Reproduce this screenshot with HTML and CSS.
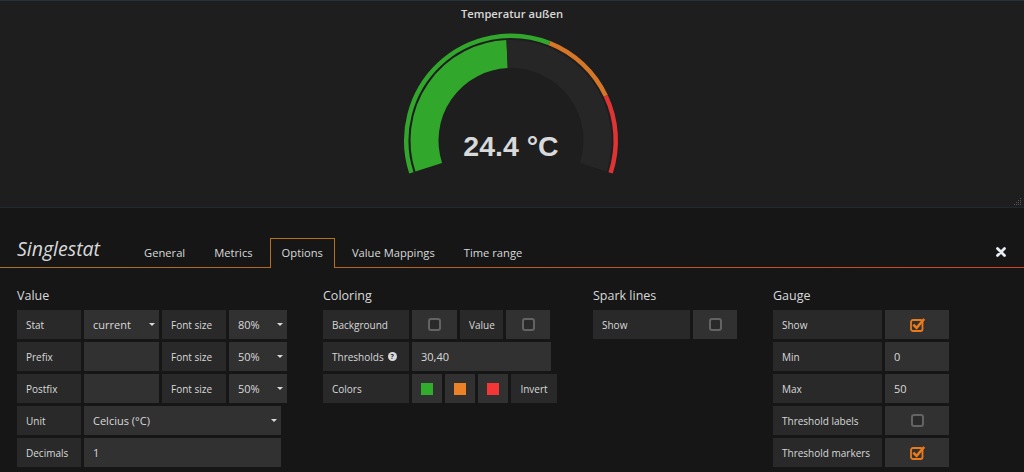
FILE: index.html
```html
<!DOCTYPE html>
<html lang="de">
<head>
<meta charset="utf-8">
<title>Singlestat</title>
<link rel="stylesheet" href="styles.css">
</head>
<body>
<div class="panel">
  <div class="panel-title">Temperatur außen</div>
  <svg class="gauge" width="230" height="160" viewBox="0 0 230 160">
    <path d="M15.38 151.87 A104.75 104.75 0 0 1 153.56 22.11" stroke="#31a82c" stroke-width="4.5" fill="none"/>
    <path d="M153.56 22.11 A104.75 104.75 0 0 1 209.78 74.90" stroke="#d67627" stroke-width="4.5" fill="none"/>
    <path d="M209.78 74.90 A104.75 104.75 0 0 1 214.62 151.87" stroke="#e03434" stroke-width="4.5" fill="none"/>
    <path d="M32.73 146.23 A86.5 86.5 0 0 1 111.09 33.09" stroke="#31a82c" stroke-width="28" fill="none"/>
    <path d="M111.09 33.09 A86.5 86.5 0 0 1 197.27 146.23" stroke="#262626" stroke-width="28" fill="none"/>
    <text class="gauge-value" x="115" y="135" text-anchor="middle">24.4 °C</text>
  </svg>
  <svg class="resize-handle" width="8" height="8" viewBox="0 0 8 8">
    <rect x="6" y="0" width="1" height="1" fill="#555"/>
    <rect x="4" y="2" width="1" height="1" fill="#555"/>
    <rect x="6" y="2" width="1" height="1" fill="#555"/>
    <rect x="2" y="4" width="1" height="1" fill="#555"/>
    <rect x="4" y="4" width="1" height="1" fill="#555"/>
    <rect x="6" y="4" width="1" height="1" fill="#555"/>
    <rect x="0" y="6" width="1" height="1" fill="#555"/>
    <rect x="2" y="6" width="1" height="1" fill="#555"/>
    <rect x="4" y="6" width="1" height="1" fill="#555"/>
    <rect x="6" y="6" width="1" height="1" fill="#555"/>
  </svg>
</div>

<div class="editor">
  <div class="editor-header">
    <div class="editor-title">Singlestat</div>
    <div class="tabs">
      <div class="tab">General</div>
      <div class="tab">Metrics</div>
      <div class="tab active">Options</div>
      <div class="tab">Value Mappings</div>
      <div class="tab">Time range</div>
    </div>
    <svg class="close" width="10" height="10" viewBox="0 0 10 10">
      <path d="M1.5 1.5 L8.5 8.5 M8.5 1.5 L1.5 8.5" stroke="#e9edf2" stroke-width="2.8" stroke-linecap="round"/>
    </svg>
  </div>

  <div class="editor-body">
    <div class="section">
      <h5 class="section-heading">Value</h5>
      <div class="row">
        <span class="label w64">Stat</span>
        <span class="input select w75">current<i class="caret"></i></span>
        <span class="label w64">Font size</span>
        <span class="input select w58">80%<i class="caret"></i></span>
      </div>
      <div class="row">
        <span class="label w64">Prefix</span>
        <span class="input w75"></span>
        <span class="label w64">Font size</span>
        <span class="input select w58">50%<i class="caret"></i></span>
      </div>
      <div class="row">
        <span class="label w64">Postfix</span>
        <span class="input w75"></span>
        <span class="label w64">Font size</span>
        <span class="input select w58">50%<i class="caret"></i></span>
      </div>
      <div class="row">
        <span class="label w64">Unit</span>
        <span class="input select w197">Celcius (°C)<i class="caret"></i></span>
      </div>
      <div class="row">
        <span class="label w64">Decimals</span>
        <span class="input w197">1</span>
      </div>
    </div>

    <div class="section">
      <h5 class="section-heading">Coloring</h5>
      <div class="row">
        <span class="label w86">Background</span>
        <span class="input cell w45"><span class="checkbox"></span></span>
        <span class="label w43">Value</span>
        <span class="input cell w44"><span class="checkbox"></span></span>
      </div>
      <div class="row">
        <span class="label w86">Thresholds <i class="help">?</i></span>
        <span class="input w139">30,40</span>
      </div>
      <div class="row">
        <span class="label w86">Colors</span>
        <span class="input cell w30"><i class="swatch green"></i></span>
        <span class="input cell w30"><i class="swatch orange"></i></span>
        <span class="input cell w30"><i class="swatch red"></i></span>
        <span class="label w46 invert">Invert</span>
      </div>
    </div>

    <div class="section">
      <h5 class="section-heading">Spark lines</h5>
      <div class="row">
        <span class="label w97">Show</span>
        <span class="input cell w44"><span class="checkbox"></span></span>
      </div>
    </div>

    <div class="section">
      <h5 class="section-heading">Gauge</h5>
      <div class="row">
        <span class="label w109">Show</span>
        <span class="input cell w64">
          <svg class="checked" width="16" height="16" viewBox="0 0 16 16">
            <rect x="1" y="4" width="11.5" height="11" rx="2" fill="none" stroke="#eb7b18" stroke-width="1.8"/>
            <path d="M3.3 8.6 L6.6 11.9 L14.2 3" fill="none" stroke="#eb7b18" stroke-width="2.6"/>
          </svg>
        </span>
      </div>
      <div class="row">
        <span class="label w109">Min</span>
        <span class="input w64">0</span>
      </div>
      <div class="row">
        <span class="label w109">Max</span>
        <span class="input w64">50</span>
      </div>
      <div class="row">
        <span class="label w109">Threshold labels</span>
        <span class="input cell w64"><span class="checkbox"></span></span>
      </div>
      <div class="row">
        <span class="label w109">Threshold markers</span>
        <span class="input cell w64">
          <svg class="checked" width="16" height="16" viewBox="0 0 16 16">
            <rect x="1" y="4" width="11.5" height="11" rx="2" fill="none" stroke="#eb7b18" stroke-width="1.8"/>
            <path d="M3.3 8.6 L6.6 11.9 L14.2 3" fill="none" stroke="#eb7b18" stroke-width="2.6"/>
          </svg>
        </span>
      </div>
    </div>
  </div>
</div>
</body>
</html>
```

FILE: styles.css
```css
* {
  box-sizing: border-box;
  margin: 0;
  padding: 0;
}

html,
body {
  background: #161616;
}

body {
  width: 1024px;
  height: 472px;
  overflow: hidden;
  font-family: "Open Sans", "DejaVu Sans", sans-serif;
  color: #d8d9da;
}

/* ---------- panel ---------- */
.panel {
  position: relative;
  height: 208px;
  background: #1f1e1e;
  border-top: 1px solid #24323b;
  border-bottom: 1px solid #1d2a31;
  display: flex;
  flex-direction: column;
  align-items: center;
}

.panel-title {
  padding-top: 5px;
  font-size: 11.2px;
  font-weight: 600;
  line-height: 15px;
  color: #d8d9da;
}

.gauge {
  display: block;
  margin-right: 3px;
}

.gauge-value {
  font-family: "Liberation Sans", Arial, sans-serif;
  font-weight: bold;
  font-size: 28.5px;
  fill: #d8d9da;
}

.resize-handle {
  position: absolute;
  right: 2px;
  bottom: 1px;
}

/* ---------- editor ---------- */
.editor-header {
  display: flex;
  align-items: flex-end;
  height: 60px;
  padding-left: 17px;
  background: linear-gradient(to right, #a8741a, #cc471b) left bottom / 100% 1px no-repeat;
}

.editor-title {
  width: 115px;
  font-size: 19.5px;
  font-style: italic;
  line-height: 30px;
  margin-bottom: 4px;
  color: #d8d9da;
}

.tabs {
  display: flex;
}

.tab {
  height: 30px;
  padding: 0 11px;
  margin-right: 5px;
  border: 1px solid transparent;
  border-bottom: 0;
  font-size: 11.2px;
  line-height: 28px;
  color: #d8d9da;
}

.tab.active {
  border-color: #b5711b;
  background: #161616;
}

.close {
  display: block;
  margin-left: auto;
  margin-right: 18px;
  margin-bottom: 11px;
}

.editor-body {
  display: flex;
  gap: 36px;
  padding: 20px 0 0 17px;
}

.section-heading {
  font-size: 12.5px;
  font-weight: 400;
  line-height: 16px;
  margin-bottom: 6px;
  color: #d8d9da;
}

.row {
  display: flex;
  gap: 3px;
  height: 29px;
  margin-bottom: 3px;
}

.label,
.input {
  display: flex;
  align-items: center;
  height: 29px;
  flex: none;
  white-space: nowrap;
}

.label {
  background: #292929;
  padding-left: 9px;
  font-size: 10px;
  font-weight: 500;
  color: #d8d9da;
}

.input {
  background: #313131;
  padding-left: 9px;
  font-size: 11px;
  color: #d8d9da;
}

.select {
  padding-right: 4px;
}

.caret {
  margin-left: auto;
  width: 0;
  height: 0;
  border-left: 3px solid transparent;
  border-right: 3px solid transparent;
  border-top: 3px solid #d8d9da;
}

.cell {
  justify-content: center;
  padding-left: 0;
}

.invert {
  padding-left: 0;
  justify-content: center;
}

.checkbox {
  display: block;
  width: 13px;
  height: 13px;
  border: 2px solid #636363;
  border-radius: 3px;
  background: #2a2a2a;
}

.checked {
  display: block;
  margin-top: -1px;
  margin-left: 2px;
}

.help {
  display: inline-flex;
  align-items: center;
  justify-content: center;
  width: 9px;
  height: 9px;
  margin-left: 4px;
  border-radius: 50%;
  background: #d8d9da;
  color: #292929;
  font-style: normal;
  font-size: 7px;
  font-weight: 700;
  line-height: 1;
}

.swatch {
  display: block;
  width: 12px;
  height: 12px;
}

.swatch.green { background: #32ac2d; }
.swatch.orange { background: #ed8128; }
.swatch.red { background: #f53636; }

.w30 { width: 30px; }
.w43 { width: 43px; }
.w44 { width: 44px; }
.w45 { width: 45px; }
.w46 { width: 46px; }
.w58 { width: 58px; }
.w64 { width: 64px; }
.w75 { width: 75px; }
.w86 { width: 86px; }
.w97 { width: 97px; }
.w109 { width: 109px; }
.w139 { width: 139px; }
.w197 { width: 197px; }
```
